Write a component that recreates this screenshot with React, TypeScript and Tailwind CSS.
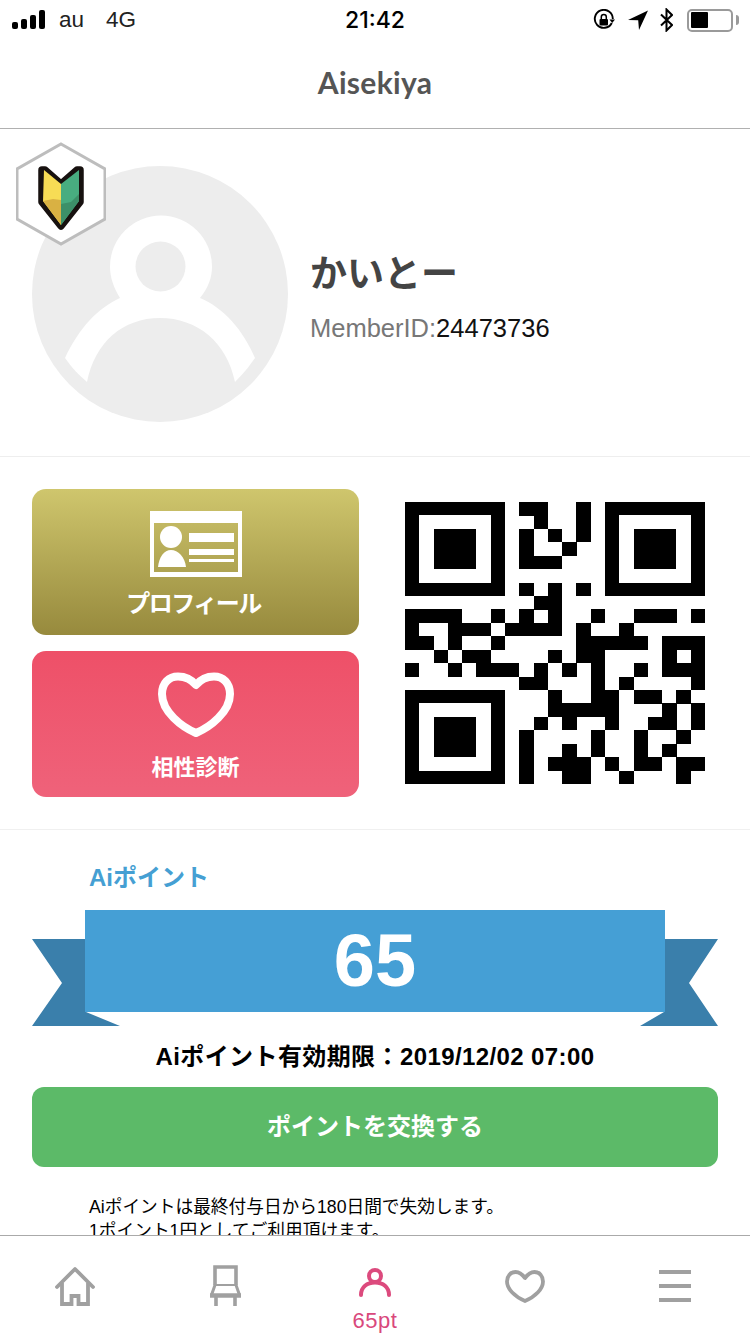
import React from "react";

const qrRows: number[][] = [
  [8, 9, 12],
  [9, 12],
  [8, 10, 12],
  [8, 11],
  [8, 9, 10],
  [],
  [8, 10, 12],
  [9, 10],
  [0, 1, 2, 3, 6, 8, 10, 13, 16, 17, 18, 20],
  [0, 3, 4, 5, 7, 8, 9, 10, 12, 15],
  [0, 1, 3, 6, 12, 13, 14, 15, 16, 18, 19, 20],
  [2, 4, 5, 10, 12, 13, 18, 20],
  [0, 3, 5, 6, 7, 9, 11, 13, 16, 18, 19, 20],
  [8, 9, 13, 15, 20],
  [10, 13, 14, 16, 17, 19],
  [10, 11, 12, 13, 14, 18, 20],
  [9, 11, 14, 17, 18, 20],
  [8, 13, 16, 19],
  [8, 11, 13, 16, 18],
  [8, 10, 11, 12, 14, 16, 17, 19, 20],
  [8, 11, 12, 15, 19],
];

function Finder({ x, y }: { x: number; y: number }) {
  return (
    <path
      fillRule="evenodd"
      d={`M${x} ${y}h7v7h-7zM${x + 1} ${y + 1}v5h5v-5zM${x + 2} ${y + 2}h3v3h-3z`}
    />
  );
}

function QR() {
  return (
    <svg viewBox="0 0 21 21" preserveAspectRatio="none" className="block w-[300px] h-[282px]" shapeRendering="crispEdges">
      <Finder x={0} y={0} />
      <Finder x={14} y={0} />
      <Finder x={0} y={14} />
      {qrRows.map((cols, r) =>
        cols.map((c) => <rect key={`${r}-${c}`} x={c} y={r} width={1.01} height={1.01} />)
      )}
    </svg>
  );
}

function StatusBar() {
  return (
    <div className="relative h-10 flex items-center text-black">
      <svg width="34" height="20" viewBox="0 0 34 20" className="ml-3 shrink-0" fill="#000">
        <rect x="0" y="12" width="6" height="7" rx="2" />
        <rect x="9" y="9" width="6" height="10" rx="2" />
        <rect x="18" y="5" width="6" height="14" rx="2" />
        <rect x="27" y="0" width="6" height="19" rx="2" />
      </svg>
      <span className="ml-[13px] text-[22.5px] leading-none font-normal text-[#222]">au</span>
      <span className="ml-[22px] text-[22.5px] leading-none font-normal text-[#222]">4G</span>
      <span className="absolute left-0 right-0 text-center text-[23px] leading-none font-medium [font-family:Inter,sans-serif]">21:42</span>
      <div className="ml-auto mr-[11px] flex items-center">
        <svg width="22" height="22" viewBox="0 0 22 22" fill="none">
          <path d="M18.8 14A9 9 0 1 1 19.8 10" stroke="#000" strokeWidth="1.9" />
          <path d="M16.5 10.5h5.5l-2.8 3.5z" fill="#000" />
          <rect x="6.5" y="10" width="8.5" height="6.5" rx="1" fill="#000" />
          <path d="M8.3 10V8a2.5 2.5 0 0 1 5 0v2" stroke="#000" strokeWidth="1.5" />
        </svg>
        <svg width="20" height="20" viewBox="0 0 20 20" className="ml-[13px]" fill="#000">
          <path d="M20 0.5 0 10l10.2 .3 .8 9.7z" />
        </svg>
        <svg width="13" height="24" viewBox="0 0 13 24" className="ml-[12px]" fill="none" stroke="#000" strokeWidth="2">
          <path d="M1 6.5 12 17 6.5 22.5V1.5L12 7 1 17.5" />
        </svg>
        <div className="ml-[14px] w-[46px] h-[23px] rounded-[5px] border-2 border-[#9a9a9a] p-[1.5px]">
          <div className="w-[17px] h-full bg-black rounded-[1px]" />
        </div>
        <div className="ml-[3px] w-[3px] h-[10px] bg-[#9a9a9a] rounded-r-sm" />
      </div>
    </div>
  );
}

function Avatar() {
  return (
    <div className="relative w-[256px] h-[256px] shrink-0">
      <svg viewBox="0 0 256 256" className="block w-full h-full">
        <circle cx="128" cy="128" r="128" fill="#ededed" />
        <path
          d="M33 192C47 162 66 142 88 132C82 122 78 112 78 100.5a51 51 0 0 1 102 0C180 112 176 122 168 132C192 142 211 164 223 192C216 202 211 208 203 216C195 176 165 152 128 152C91 152 63 176 55 216C47 209 40 202 33 192Z"
          fill="#fff"
        />
        <circle cx="128.5" cy="100.5" r="25" fill="#ededed" />
      </svg>
      <svg viewBox="0 0 90 104" width="90" height="104" className="absolute left-[-16px] top-[-24px]">
        <polygon points="45,2 89,27 89,77 45,102 1,77 1,27" fill="#fff" stroke="#bdbdbd" strokeWidth="3" />
        <polygon points="45,42 29,28 26,28 26,60 45,84 64,60 64,28 61,28" fill="#17110f" stroke="#17110f" strokeWidth="7.5" strokeLinejoin="round" />
        <polygon points="45,42 28,28 27,59 45,83" fill="#f7dc55" />
        <polygon points="45,42 63,28 63,59 45,83" fill="#48ad80" />
        <polygon points="27,59 37,57 45,58 45,83" fill="#d9b143" />
        <polygon points="63,52 55,60 45,62 45,83 63,59" fill="#3c9069" />
      </svg>
    </div>
  );
}

function Profile() {
  return (
    <section className="h-[328px] border-b border-[#eeeeee] pl-8 pt-[37px] flex items-start">
      <Avatar />
      <div className="ml-[22px] mt-[87px]">
        <div className="text-[37px] leading-[44px] font-bold text-[#444]">かいとー</div>
        <div className="mt-[17px] text-[25.5px] leading-[28px] text-[#777]">
          MemberID:<span className="text-[#111]">24473736</span>
        </div>
      </div>
    </section>
  );
}

function CardIcon() {
  return (
    <svg width="92" height="66" viewBox="0 0 92 66" className="block" fill="#fff">
      <path fillRule="evenodd" d="M0 0h92v66H0zM4 12v49h84V12z" />
      <circle cx="21" cy="26" r="11" />
      <path d="M8 56c1-10 6-17 13-17s14 7 15 17z" />
      <rect x="39" y="22" width="45" height="9" />
      <rect x="39" y="38" width="45" height="6" />
      <rect x="39" y="48" width="45" height="3" />
    </svg>
  );
}

function BigHeart() {
  return (
    <svg width="76" height="66" viewBox="0 0 76 66" className="block" fill="none">
      <path
        d="M38 13C33 7 27 4.500 20 4.500C11 4.500 4 11 4 22C4 40 24 55 38 61C52 55 72 40 72 22C72 11 65 4.500 56 4.500C49 4.500 43 7 38 13Z"
        stroke="#fff"
        strokeWidth="8"
        strokeLinejoin="round"
      />
    </svg>
  );
}

function Actions() {
  return (
    <section className="h-[373px] border-b border-[#f0f0f0] pl-8 pt-8 flex items-start">
      <div className="w-[327px] flex flex-col gap-4 shrink-0">
        <div className="h-[146px] rounded-[14px] bg-gradient-to-b from-[#cfc66d] to-[#978a3d] flex flex-col items-center pt-[22px]">
          <CardIcon />
          <span className="mt-[10px] mr-[4px] text-[24px] leading-[34px] font-semibold text-white tracking-[-1.5px]">プロフィール</span>
        </div>
        <div className="h-[146px] rounded-[14px] bg-gradient-to-b from-[#ee5068] to-[#ef627a] flex flex-col items-center pt-[21px]">
          <BigHeart />
          <span className="mt-[14px] text-[22px] leading-[32px] font-semibold text-white">相性診断</span>
        </div>
      </div>
      <div className="ml-[46px] mt-[13px]">
        <QR />
      </div>
    </section>
  );
}

function Ribbon() {
  return (
    <div className="relative mx-8 h-[116px]">
      <svg viewBox="0 0 686 116" width="686" height="116" className="absolute left-0 top-0">
        <polygon points="0,29 54,29 54,102 88,116 0,116 30,73" fill="#3a7fab" />
        <polygon points="686,29 632,29 632,102 608,116 686,116 657,73" fill="#3a7fab" />
      </svg>
      <div className="absolute left-[53px] top-0 w-[580px] h-[102px] bg-[#459fd5] flex items-center justify-center">
        <span className="text-[74px] leading-none font-bold text-white">65</span>
      </div>
    </div>
  );
}

function Points() {
  return (
    <section>
      <div className="pl-[89px] pt-[31px] h-[80px] text-[24px] leading-[34px] font-bold text-[#459fd3]">Aiポイント</div>
      <Ribbon />
      <div className="mt-[14px] text-center text-[24px] leading-[34px] font-bold text-black tracking-[0.4px]">Aiポイント有効期限：2019/12/02 07:00</div>
      <div className="mx-8 mt-[13px] h-[80px] rounded-xl bg-[#5cba68] flex items-center justify-center text-[24px] font-semibold text-white">
        ポイントを交換する
      </div>
      <div className="pl-[89px] mt-[28px] text-[17.7px] leading-[24px] text-black">
        <div>Aiポイントは最終付与日から180日間で失効します。</div>
        <div>1ポイント1円としてご利用頂けます。</div>
      </div>
    </section>
  );
}

function TabBar() {
  return (
    <footer className="h-[99px] shrink-0 border-t border-[#aaaaaa] bg-white grid grid-cols-5">
      <div className="flex justify-center pt-[30px]">
        <svg width="40" height="41" viewBox="0 0 40 41" fill="none" stroke="#a0a0a0" strokeWidth="3.8">
          <path d="M2 21 20 3l18 18" strokeLinejoin="round" strokeLinecap="round" />
          <path d="M7 17v21h9.500V30h7v8H33V17" />
        </svg>
      </div>
      <div className="flex justify-center pt-[29px]">
        <svg width="33" height="41" viewBox="0 0 33 41" fill="none" stroke="#a0a0a0" strokeWidth="3.6">
          <path d="M6 20V2h21v18" />
          <path d="M6 20h21" strokeWidth="2" />
          <path d="M6 20 2.500 30M27 20l3.500 10" strokeWidth="3" />
          <path d="M1 30.500h31" strokeWidth="4.500" />
          <path d="M7 32v9M26 32v9" />
        </svg>
      </div>
      <div className="flex flex-col items-center pt-[32px]">
        <svg width="32" height="29" viewBox="0 0 32 29" fill="none" stroke="#dc4a7d" strokeWidth="4">
          <circle cx="16" cy="8" r="6" />
          <path d="M2 27C2 19 8 14.500 16 14.500S30 19 30 27" strokeLinecap="round" />
        </svg>
        <span className="mt-[13px] text-[22px] leading-[22px] tracking-[0.5px] text-[#d9487c]">65pt</span>
      </div>
      <div className="flex justify-center pt-[34px]">
        <svg width="40" height="33" viewBox="0 0 40 33" fill="none">
          <path
            d="M20 8C17 4 14 2 10.500 2C5.500 2 2 6 2 11.500C2 19 10 27 20 31C30 27 38 19 38 11.500C38 6 34.500 2 29.500 2C26 2 23 4 20 8Z"
            stroke="#a0a0a0"
            strokeWidth="3.8"
            strokeLinejoin="round"
          />
        </svg>
      </div>
      <div className="flex justify-center pt-[34px]">
        <div className="w-8 flex flex-col gap-[10px]">
          <div className="h-1 bg-[#a0a0a0]" />
          <div className="h-1 bg-[#a0a0a0]" />
          <div className="h-1 bg-[#a0a0a0]" />
        </div>
      </div>
    </footer>
  );
}

export default function App() {
  return (
    <div className="w-[750px] h-[1334px] overflow-hidden bg-white flex flex-col [font-family:'Liberation_Sans','Noto_Sans_CJK_JP',sans-serif]">
      <header className="shrink-0 h-[129px] border-b border-[#b0b0b0]">
        <StatusBar />
        <div className="h-[88px] flex items-center justify-center pb-[4px] text-[30px] font-bold text-[#555] tracking-[0.3px] [font-family:Lato,sans-serif]">
          Aisekiya
        </div>
      </header>
      <main className="flex-1 overflow-hidden">
        <Profile />
        <Actions />
        <Points />
      </main>
      <TabBar />
    </div>
  );
}
